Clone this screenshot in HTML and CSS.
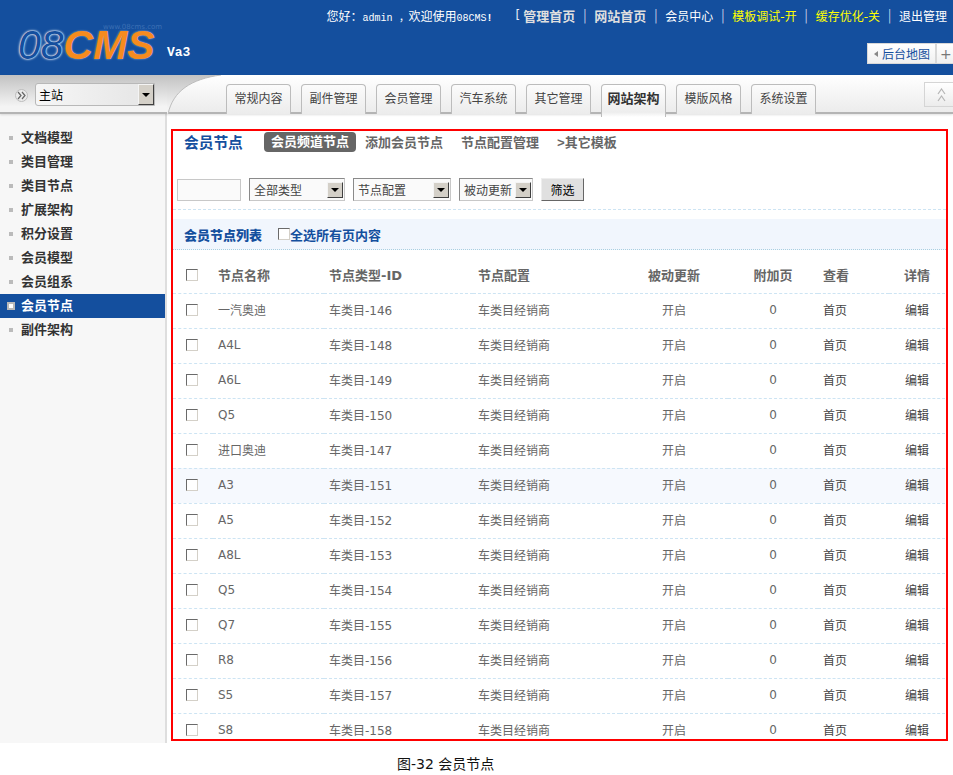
FILE: index.html
```html
<!DOCTYPE html>
<html lang="zh-CN">
  <head>
    <meta charset="UTF-8" />
    <title>会员节点</title>
    <link rel="stylesheet" href="styles.css">
  </head>
  <body>
    <div class="page">
      <div class="header">
        <div class="logo">
          <span class="logo-url">www.08cms.com</span>
          <span class="logo-name"><i>08</i><b>CMS</b></span>
        </div>
        <span class="version">Va3</span>
        <div class="header-right">
          <div class="toplinks">
            <span class="welcome">您好：<span class="mono">admin ，</span>欢迎使用<span class="mono">08CMS<b>!</b></span></span>
            <span class="bracket">[</span>
            <a class="strong">管理首页</a><span class="sep">|</span>
            <a class="strong">网站首页</a><span class="sep">|</span>
            <a>会员中心</a><span class="sep">|</span>
            <a class="yellow">模板调试-开</a><span class="sep">|</span>
            <a class="yellow">缓存优化-关</a><span class="sep">|</span>
            <a>退出管理</a>
          </div>
          <div class="mapbar">
            <span class="mapbtn"><span class="mapicon"></span>后台地图</span>
            <span class="plusbtn">+</span>
          </div>
        </div>
      </div>

      <div class="navbar">
        <div class="nav-left">
          <span class="round">
            <svg width="9" height="9" viewBox="0 0 9 9">
              <path d="M1 1L4 4.5L1 8M5 1L8 4.5L5 8" fill="none" stroke="#666" stroke-width="1.2" />
            </svg>
          </span>
          <div class="sel site-sel"><span>主站</span><span class="arrow"></span></div>
        </div>
        <svg class="swoosh" width="55" height="39" viewBox="0 0 55 39">
          <defs>
            <linearGradient id="sw" x1="0" y1="0" x2="0" y2="1">
              <stop offset="0" stop-color="#c2c2c2" />
              <stop offset="0.85" stop-color="#f4f4f4" />
            </linearGradient>
          </defs>
          <path d="M0 0H54C24 4 6 16 1 39H0Z" fill="url(#sw)" />
          <path d="M54 0C24 4 6 16 1 39" fill="none" stroke="#bdbdbd" />
        </svg>
        <div class="tabs">
          <a class="tab">常规内容</a>
          <a class="tab">副件管理</a>
          <a class="tab">会员管理</a>
          <a class="tab">汽车系统</a>
          <a class="tab">其它管理</a>
          <a class="tab active">网站架构</a>
          <a class="tab">模版风格</a>
          <a class="tab">系统设置</a>
        </div>
        <span class="upbtn">
          <svg width="9" height="14" viewBox="0 0 9 14">
            <path d="M1 6L4.5 1L8 6M1 13L4.5 8L8 13" fill="none" stroke="#b5b5b5" stroke-width="1.2" />
          </svg>
        </span>
      </div>

      <div class="body">
        <ul class="sidebar">
          <li>文档模型</li>
          <li>类目管理</li>
          <li>类目节点</li>
          <li>扩展架构</li>
          <li>积分设置</li>
          <li>会员模型</li>
          <li>会员组系</li>
          <li class="current">会员节点</li>
          <li>副件架构</li>
        </ul>

        <div class="main">
          <div class="box">
            <div class="titlebar">
              <h3>会员节点</h3>
              <a class="pill">会员频道节点</a>
              <a class="sublink l1">添加会员节点</a>
              <a class="sublink l2">节点配置管理</a>
              <a class="sublink other">&gt;其它模板</a>
            </div>

            <div class="filter">
              <span class="textbox"></span>
              <div class="sel w96"><span>全部类型</span><span class="arrow"></span></div>
              <div class="sel w98"><span>节点配置</span><span class="arrow"></span></div>
              <div class="sel w74"><span>被动更新</span><span class="arrow"></span></div>
              <button class="filter-btn">筛选</button>
            </div>

            <div class="listhead">
              <strong>会员节点列表</strong>
              <label class="checkall"><input type="checkbox" class="check" />全选所有页内容</label>
            </div>

            <table class="list">
              <colgroup>
                <col class="c-check" /><col class="c-name" /><col class="c-type" /><col class="c-conf" />
                <col class="c-pass" /><col class="c-add" /><col class="c-look" /><col class="c-edit" />
              </colgroup>
              <thead>
                <tr>
                  <th class="mid"><input type="checkbox" class="check" /></th>
                  <th>节点名称</th>
                  <th>节点类型-ID</th>
                  <th>节点配置</th>
                  <th class="mid">被动更新</th>
                  <th class="mid">附加页</th>
                  <th>查看</th>
                  <th class="mid">详情</th>
                </tr>
              </thead>
              <tbody>
                <tr><td class="mid"><input type="checkbox" class="check" /></td><td>一汽奥迪</td><td>车类目-146</td><td>车类目经销商</td><td class="mid">开启</td><td class="mid">0</td><td class="dark">首页</td><td class="mid dark">编辑</td></tr>
                <tr><td class="mid"><input type="checkbox" class="check" /></td><td>A4L</td><td>车类目-148</td><td>车类目经销商</td><td class="mid">开启</td><td class="mid">0</td><td class="dark">首页</td><td class="mid dark">编辑</td></tr>
                <tr><td class="mid"><input type="checkbox" class="check" /></td><td>A6L</td><td>车类目-149</td><td>车类目经销商</td><td class="mid">开启</td><td class="mid">0</td><td class="dark">首页</td><td class="mid dark">编辑</td></tr>
                <tr><td class="mid"><input type="checkbox" class="check" /></td><td>Q5</td><td>车类目-150</td><td>车类目经销商</td><td class="mid">开启</td><td class="mid">0</td><td class="dark">首页</td><td class="mid dark">编辑</td></tr>
                <tr><td class="mid"><input type="checkbox" class="check" /></td><td>进口奥迪</td><td>车类目-147</td><td>车类目经销商</td><td class="mid">开启</td><td class="mid">0</td><td class="dark">首页</td><td class="mid dark">编辑</td></tr>
                <tr class="hover"><td class="mid"><input type="checkbox" class="check" /></td><td>A3</td><td>车类目-151</td><td>车类目经销商</td><td class="mid">开启</td><td class="mid">0</td><td class="dark">首页</td><td class="mid dark">编辑</td></tr>
                <tr><td class="mid"><input type="checkbox" class="check" /></td><td>A5</td><td>车类目-152</td><td>车类目经销商</td><td class="mid">开启</td><td class="mid">0</td><td class="dark">首页</td><td class="mid dark">编辑</td></tr>
                <tr><td class="mid"><input type="checkbox" class="check" /></td><td>A8L</td><td>车类目-153</td><td>车类目经销商</td><td class="mid">开启</td><td class="mid">0</td><td class="dark">首页</td><td class="mid dark">编辑</td></tr>
                <tr><td class="mid"><input type="checkbox" class="check" /></td><td>Q5</td><td>车类目-154</td><td>车类目经销商</td><td class="mid">开启</td><td class="mid">0</td><td class="dark">首页</td><td class="mid dark">编辑</td></tr>
                <tr><td class="mid"><input type="checkbox" class="check" /></td><td>Q7</td><td>车类目-155</td><td>车类目经销商</td><td class="mid">开启</td><td class="mid">0</td><td class="dark">首页</td><td class="mid dark">编辑</td></tr>
                <tr><td class="mid"><input type="checkbox" class="check" /></td><td>R8</td><td>车类目-156</td><td>车类目经销商</td><td class="mid">开启</td><td class="mid">0</td><td class="dark">首页</td><td class="mid dark">编辑</td></tr>
                <tr><td class="mid"><input type="checkbox" class="check" /></td><td>S5</td><td>车类目-157</td><td>车类目经销商</td><td class="mid">开启</td><td class="mid">0</td><td class="dark">首页</td><td class="mid dark">编辑</td></tr>
                <tr><td class="mid"><input type="checkbox" class="check" /></td><td>S8</td><td>车类目-158</td><td>车类目经销商</td><td class="mid">开启</td><td class="mid">0</td><td class="dark">首页</td><td class="mid dark">编辑</td></tr>
              </tbody>
            </table>
          </div>
        </div>
      </div>

      <p class="caption">图-32 会员节点</p>
    </div>
  </body>
</html>
```

FILE: styles.css
```css
* {
  box-sizing: border-box;
}

html,
body {
  margin: 0;
  padding: 0;
  background: #fff;
}

body {
  font-family: "DejaVu Sans", "Noto Sans CJK SC", sans-serif;
  font-size: 12px;
  color: #666;
}

.page {
  width: 953px;
  height: 775px;
  overflow: hidden;
}

/* header */
.header {
  height: 75px;
  background: #144f9e;
  display: flex;
  overflow: hidden;
}

.logo {
  width: 167px;
  flex: none;
  padding: 24px 0 0 18px;
}

.logo-url {
  display: block;
  height: 6px;
  margin-left: 85px;
  font-size: 7px;
  line-height: 6px;
  color: #3c6fb4;
  white-space: nowrap;
}

.logo-name {
  display: block;
  font-family: "Liberation Sans", sans-serif;
  font-size: 41px;
  line-height: 30px;
  font-style: italic;
  white-space: nowrap;
}

.logo-name i {
  color: #144f9e;
  font-weight: normal;
  text-shadow: 0 0 2px #dfe9f7, 0 0 3px #dfe9f7, 0 0 1px #fff;
}

.logo-name b {
  color: #f68b1f;
  text-shadow: 0 0 2px #9db9de;
}

.version {
  padding-top: 45px;
  width: 160px;
  flex: none;
  font-family: "Liberation Mono", monospace;
  font-size: 13px;
  font-weight: bold;
  color: #fff;
}

.header-right {
  flex: 1;
  min-width: 0;
  position: relative;
}

.toplinks {
  display: flex;
  justify-content: flex-end;
  align-items: center;
  height: 30px;
  padding-right: 6px;
  color: #e6edf7;
  white-space: nowrap;
  margin-left: -100px;
}

.toplinks .mono {
  font-family: "Liberation Mono", monospace;
  font-size: 10px;
}

.welcome {
  margin-right: 23px;
  color: #fff;
}

.bracket {
  margin-right: 3px;
}

.sep {
  width: 19px;
  text-align: center;
  font-size: 14px;
  font-weight: 200;
}

.toplinks a {
  color: #fff;
}

.toplinks a.strong {
  font-size: 13px;
  font-weight: bold;
  color: #dfdfdf;
}

.toplinks a.yellow {
  color: #ffff00;
}

.mapbar {
  display: flex;
  justify-content: flex-end;
  margin-top: 13px;
  height: 21px;
}

.mapbtn,
.plusbtn {
  display: flex;
  align-items: center;
  height: 21px;
  background: linear-gradient(#fff, #f0f0f0);
  border: 1px solid #d8d8d8;
  color: #144f9e;
}

.mapbtn {
  width: 69px;
  padding-left: 6px;
}

.mapicon {
  width: 0;
  height: 0;
  margin-right: 4px;
  border: 3px solid transparent;
  border-right: 4px solid #888;
  border-left: 0;
}

.plusbtn {
  width: 17px;
  padding-left: 3px;
  border-right: 0;
  color: #777;
  font-size: 14px;
}

/* nav bar */
.navbar {
  height: 39px;
  display: flex;
  position: relative;
  background: linear-gradient(#fff, #ececec);
  border-bottom: 2px solid #b4b4b4;
  box-shadow: 0 1px 2px rgba(0, 0, 0, 0.12);
}

.nav-left {
  width: 167px;
  flex: none;
  display: flex;
  align-items: flex-start;
  padding: 8px 0 0 15px;
  background: linear-gradient(#c2c2c2, #f4f4f4 85%);
}

.round {
  display: flex;
  align-items: center;
  justify-content: center;
  width: 13px;
  height: 13px;
  margin: 6px 7px 0 0;
  border-radius: 50%;
  background: #eaeaea;
  border: 1px solid #bdbdbd;
}

.swoosh {
  flex: none;
  display: block;
}

.tabs {
  display: flex;
  gap: 10px;
  padding: 9px 0 0 4px;
}

.tab {
  width: 65px;
  height: 30px;
  border: 1px solid #bcbcbc;
  border-bottom: 0;
  border-radius: 4px 4px 0 0;
  background: linear-gradient(#fbfbfb, #ececec);
  color: #444;
  text-align: center;
  line-height: 28px;
}

.tab.active {
  height: 33px;
  background: linear-gradient(#fff, #ededed 85%, #fff);
  font-weight: bold;
  font-size: 13px;
  color: #333;
  position: relative;
}

.upbtn {
  position: absolute;
  top: 7px;
  right: 0;
  width: 29px;
  height: 25px;
  padding-left: 5px;
  display: flex;
  align-items: center;
  justify-content: center;
  background: linear-gradient(#fff, #ececec);
  border: 1px solid #d5d5d5;
  border-right: 0;
}

/* selects drawn like the old windows ones */
.sel {
  display: flex;
  align-items: center;
  justify-content: space-between;
  height: 23px;
  padding: 0 1px 0 4px;
  background: #fafafa;
  border: 1px solid #c8c8c8;
  border-top-color: #8a8a8a;
  border-left-color: #8a8a8a;
  color: #444;
}

.arrow {
  position: relative;
  flex: none;
  width: 16px;
  height: 16px;
  background: #d4d0c8;
  border: 1px solid;
  border-color: #f4f4f4 #404040 #404040 #f4f4f4;
}

.arrow::after {
  content: "";
  position: absolute;
  left: 3px;
  top: 5px;
  border: 4px solid transparent;
  border-top: 4px solid #000;
  border-bottom: 0;
}

.site-sel {
  width: 120px;
  padding: 0 0 0 3px;
  background: linear-gradient(90deg, #f6f6f6, #e8e8e8 80%);
  border-radius: 3px 0 0 3px;
  border-color: #b8b8b8;
  color: #000;
}

.site-sel .arrow {
  height: 21px;
}

.site-sel .arrow::after {
  top: 8px;
}

/* body */
.body {
  display: flex;
  height: 629px;
}

.sidebar {
  width: 167px;
  flex: none;
  margin: 0;
  padding: 12px 0 0;
  list-style: none;
  background: #f7f7f7;
  border-right: 2px solid #dedede;
}

.sidebar li {
  position: relative;
  height: 24px;
  padding-left: 21px;
  line-height: 23px;
  font-size: 13px;
  font-weight: bold;
  color: #333;
}

.sidebar li::before {
  content: "";
  position: absolute;
  left: 9px;
  top: 10px;
  width: 4px;
  height: 4px;
  background: #bbb;
}

.sidebar li.current {
  background: #144f9e;
  color: #fff;
}

/* pseudo elements miss the box-sizing rule, so 4 + 2 + 2 */
.sidebar li.current::before {
  left: 7px;
  top: 8px;
  width: 4px;
  height: 4px;
  background: #fff;
  border: 2px solid #b9b9b9;
}

.main {
  flex: 1;
  min-width: 0;
  padding: 15px 5px 2px 4px;
}

.box {
  height: 612px;
  border: 2px solid #f00;
  overflow: hidden;
}

.titlebar {
  display: flex;
  align-items: center;
  height: 22px;
  padding-left: 11px;
  font-size: 13px;
  font-weight: bold;
}

.titlebar h3 {
  width: 80px;
  margin: 0 0 2px;
  font-size: 14.7px;
  font-weight: bold;
  color: #144f9e;
}

.pill {
  width: 92px;
  height: 20px;
  margin-right: 9px;
  background: #666;
  border-radius: 4px;
  color: #fff;
  line-height: 20px;
  text-align: center;
}

.sublink {
  margin-bottom: 2px;
  color: #666;
}

.other {
  font-family: "Liberation Mono", "Noto Sans CJK SC", monospace;
}

.l1,
.l2 {
  margin-right: 18px;
}

.filter {
  display: flex;
  align-items: flex-start;
  height: 57px;
  padding: 25px 0 0 4px;
  gap: 8px;
  border-bottom: 1px dashed #cde4f3;
}

.textbox {
  width: 64px;
  height: 22px;
  margin-top: 1px;
  background: #fafafa;
  border: 1px solid #c8c8c8;
}

.w96 { width: 96px; }
.w98 { width: 98px; }
.w74 { width: 74px; }

.filter-btn {
  width: 43px;
  height: 23px;
  padding: 0;
  font: inherit;
  color: #000;
  background: #e0e0e0;
  border: 1px solid;
  border-color: #eee #666 #666 #eee;
}

.listhead {
  display: flex;
  align-items: center;
  height: 31px;
  margin-top: 9px;
  padding-left: 11px;
  background: #f1f6fd;
  border-bottom: 1px dotted #a9cfe0;
  font-size: 13px;
  font-weight: bold;
  color: #144f9e;
}

.listhead strong {
  width: 94px;
}

.checkall {
  display: flex;
  align-items: center;
}

.check {
  appearance: none;
  display: block;
  width: 12px;
  height: 12px;
  margin: 0;
  background: #fff;
  border: 1px solid;
  border-color: #6a6a6a #d4d0c8 #d4d0c8 #6a6a6a;
}

.list {
  width: 772px;
  table-layout: fixed;
  border-collapse: collapse;
}

.c-check { width: 40px; }
.c-name { width: 111px; }
.c-type { width: 149px; }
.c-conf { width: 147px; }
.c-pass { width: 108px; }
.c-add { width: 90px; }
.c-look { width: 71px; }
.c-edit { width: 56px; }

.list th,
.list td {
  padding: 0 0 0 5px;
  text-align: left;
  border-bottom: 1px dashed #cde4f3;
  white-space: nowrap;
}

.list th {
  height: 43px;
  padding-top: 7px;
  font-size: 13px;
  font-weight: bold;
  color: #666;
}

.list td {
  height: 35px;
  padding-bottom: 2px;
}

.list th.mid,
.list td.mid {
  padding-left: 0;
  text-align: center;
}

.list .check {
  margin-left: 13px;
}

.list td.dark {
  color: #444;
}

.list tr.hover td {
  background: #f6f9fe;
}

.caption {
  margin: 0;
  padding-top: 10px;
  padding-left: 397px;
  font-size: 14px;
  color: #111;
}
```
